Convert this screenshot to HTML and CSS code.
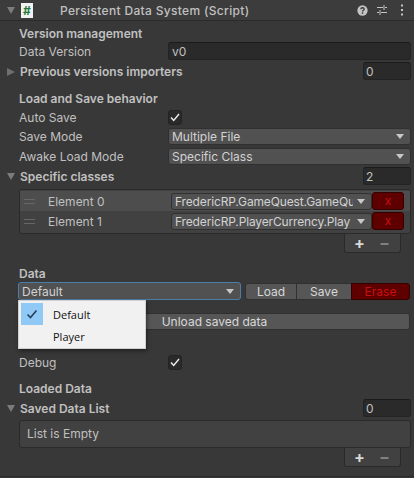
FILE: index.html
```html
<!DOCTYPE html>
<html lang="en">

<head>
  <meta charset="UTF-8">
  <title>Persistent Data System</title>
  <link rel="stylesheet" href="styles.css">
</head>

<body>
  <div class="header">
    <span class="fold open"></span>
    <span class="script-icon">#</span>
    <span class="title">Persistent Data System (Script)</span>
    <svg class="tool help" width="11" height="11" viewBox="0 0 12 12">
      <circle cx="6" cy="6" r="5.6" fill="#c4c4c4" />
      <path d="M4.1 4.7C4.2 3.5 5 3 6 3S7.9 3.6 7.9 4.6C7.9 5.8 6 5.8 6 7.2" fill="none" stroke="#383838" stroke-width="1.4" />
      <rect x="5.2" y="8" width="1.6" height="1.6" fill="#383838" />
    </svg>
    <svg class="tool presets" width="12" height="12" viewBox="0 0 12 12">
      <path d="M1 3.5H7M9 3.5H11M1 8.5H3M5 8.5H11M8 1V6M4 6V11" fill="none" stroke="#c4c4c4" stroke-width="1" />
    </svg>
    <svg class="tool menu" width="4" height="12" viewBox="0 0 4 12">
      <rect x="1" y="0.5" width="2" height="2" fill="#c4c4c4" />
      <rect x="1" y="5" width="2" height="2" fill="#c4c4c4" />
      <rect x="1" y="9.5" width="2" height="2" fill="#c4c4c4" />
    </svg>
  </div>

  <div class="inspector">
    <div class="row bold mt3">Version management</div>
    <div class="row">
      <span class="label">Data Version</span>
      <span class="field grow">v0</span>
    </div>
    <div class="row mt2 foldout">
      <span class="fold"></span>
      <span class="label grow bold">Previous versions importers</span>
      <span class="field count">0</span>
    </div>

    <div class="row bold mt9">Load and Save behavior</div>
    <div class="row mt1">
      <span class="label">Auto Save</span>
      <span class="checkbox">
        <svg width="10" height="9" viewBox="0 0 10 9"><path d="M1 4.5L3.7 7.5L9 1" fill="none" stroke="#eeeeee" stroke-width="1.4" /></svg>
      </span>
    </div>
    <div class="row mt1">
      <span class="label">Save Mode</span>
      <span class="dropdown grow"><span class="value">Multiple File</span><i class="caret"></i></span>
    </div>
    <div class="row mt2">
      <span class="label">Awake Load Mode</span>
      <span class="dropdown grow"><span class="value">Specific Class</span><i class="caret"></i></span>
    </div>
    <div class="row mt2 foldout">
      <span class="fold open"></span>
      <span class="label grow bold">Specific classes</span>
      <span class="field count">2</span>
    </div>

    <div class="list-box classes">
      <div class="element active">
        <span class="handle"></span>
        <span class="element-label">Element 0</span>
        <span class="dropdown element-type"><span class="value">FredericRP.GameQuest.GameQu</span><i class="caret"></i></span>
        <span class="remove">x</span>
      </div>
      <div class="element">
        <span class="handle"></span>
        <span class="element-label">Element 1</span>
        <span class="dropdown element-type"><span class="value">FredericRP.PlayerCurrency.Play</span><i class="caret"></i></span>
        <span class="remove">x</span>
      </div>
    </div>
    <div class="list-footer"><span class="plus">+</span><span class="minus">&minus;</span></div>

    <div class="row bold mt11">Data</div>
    <div class="row data-row">
      <span class="dropdown data-select"><span class="value">Default</span><i class="caret"></i></span>
      <span class="btn-group">
        <span class="btn load">Load</span>
        <span class="btn save">Save</span>
        <span class="btn erase">Erase</span>
      </span>
    </div>
    <div class="btn unload">Unload saved data</div>

    <div class="row debug-row">
      <span class="label">Debug</span>
      <span class="checkbox">
        <svg width="10" height="9" viewBox="0 0 10 9"><path d="M1 4.5L3.7 7.5L9 1" fill="none" stroke="#eeeeee" stroke-width="1.4" /></svg>
      </span>
    </div>
    <div class="row bold mt8">Loaded Data</div>
    <div class="row mt2 foldout">
      <span class="fold open"></span>
      <span class="label grow bold">Saved Data List</span>
      <span class="field count">0</span>
    </div>
    <div class="list-box empty">List is Empty</div>
    <div class="list-footer"><span class="plus">+</span><span class="minus">&minus;</span></div>
  </div>

  <div class="bottom-line"></div>

  <div class="popup">
    <div class="popup-item">
      <span class="tick">
        <svg width="12" height="10" viewBox="0 0 12 10"><path d="M1.5 5.5L4.5 8.5L10.5 1.5" fill="none" stroke="#26405c" stroke-width="1.6" /></svg>
      </span>
      <span>Default</span>
    </div>
    <div class="popup-item">
      <span class="tick none"></span>
      <span>Player</span>
    </div>
  </div>
</body>

</html>
```

FILE: styles.css
```css
html, body {
  margin: 0;
  height: 478px;
  overflow: hidden;
}

body {
  position: relative;
  background: #383838;
  color: #c0c0c0;
  font-family: Inter, "Liberation Sans", sans-serif;
  font-size: 12px;
}

.header {
  display: flex;
  align-items: center;
  height: 20px;
  background: #3c3c3c;
  border-bottom: 1px solid #2b2b2b;
  padding-left: 7px;
}

.header .fold {
  margin-right: 6px;
}

.script-icon {
  width: 12px;
  height: 15px;
  background: #f2f2f2;
  color: #1f7a3c;
  font-size: 12px;
  font-weight: 700;
  line-height: 15px;
  text-align: center;
}

.title {
  flex: 1;
  margin-left: 27px;
  font-weight: 500;
  letter-spacing: 0.33px;
}

.tool {
  flex: none;
}

.presets {
  margin-left: 8px;
}

.menu {
  margin: 0 10px 0 12px;
}

.inspector {
  padding: 0 3px 0 19px;
}

.row {
  display: flex;
  align-items: center;
  height: 18px;
}

.bold {
  font-weight: 600;
}

.mt1 { margin-top: 1px; }
.mt2 { margin-top: 2px; }
.mt3 { margin-top: 3px; }
.mt8 { margin-top: 8px; }
.mt9 { margin-top: 9px; }
.mt11 { margin-top: 11px; }

.label {
  flex: none;
  width: 149px;
}

.grow {
  flex: 1;
  min-width: 0;
}

.foldout {
  position: relative;
}

.foldout .label {
  padding-left: 1px;
}

.fold {
  flex: none;
  width: 0;
  height: 0;
  border-style: solid;
  border-width: 4.5px 0 4.5px 8px;
  border-color: transparent transparent transparent #6e6e6e;
}

.fold.open {
  border-width: 7px 4.5px 0 4.5px;
  border-color: #7c7c7c transparent transparent transparent;
}

.foldout .fold {
  position: absolute;
  left: -12px;
  top: 6px;
}

.field {
  box-sizing: border-box;
  height: 18px;
  line-height: 17px;
  padding-left: 3px;
  background: #2a2a2a;
  border: 1px solid #232323;
  border-top-color: #1b1b1b;
  border-radius: 3px;
}

.count {
  flex: none;
  width: 48px;
  padding-left: 2px;
}

.checkbox {
  box-sizing: border-box;
  display: flex;
  align-items: center;
  justify-content: center;
  width: 14px;
  height: 15px;
  background: #2a2a2a;
  border: 1px solid #232323;
  border-radius: 3px;
}

.dropdown {
  box-sizing: border-box;
  display: flex;
  align-items: center;
  height: 17px;
  padding: 0 4px 0 3px;
  background: #515151;
  border: 1px solid #303030;
  border-radius: 3px;
  color: #d2d2d2;
}

.value {
  flex: 1;
  min-width: 0;
  overflow: hidden;
  white-space: nowrap;
}

.caret {
  flex: none;
  width: 0;
  height: 0;
  margin: 0 2px 0 4px;
  border-style: solid;
  border-width: 5px 4px 0 4px;
  border-color: #c8c8c8 transparent transparent transparent;
}

.list-box {
  box-sizing: border-box;
  background: #414141;
  border: 1px solid #2a2a2a;
  border-radius: 3px;
}

.classes {
  height: 45px;
  margin-top: 4px;
  padding-top: 1px;
}

.element {
  display: flex;
  align-items: center;
  height: 20px;
  padding-left: 4px;
}

.element.active {
  background: #4d4d4d;
}

.handle {
  flex: none;
  width: 11px;
  height: 3px;
  border-top: 1px solid #666666;
  border-bottom: 1px solid #666666;
}

.element-label {
  flex: none;
  width: 123px;
  margin-left: 13px;
}

.element-type {
  width: 201px;
  flex: none;
  letter-spacing: -0.15px;
}

.remove {
  flex: none;
  box-sizing: border-box;
  width: 32px;
  height: 18px;
  background: #5e0000;
  border: 1px solid #350000;
  border-radius: 3px;
  color: #c80f0f;
  line-height: 15px;
  text-align: center;
}

.list-footer {
  box-sizing: border-box;
  display: flex;
  align-items: center;
  width: 57px;
  height: 19px;
  margin: 0 10px 0 auto;
  padding-left: 9px;
  background: #414141;
  border: 1px solid #2a2a2a;
  border-top: none;
  border-radius: 0 0 3px 3px;
  font-size: 16px;
  font-weight: 700;
}

.plus {
  width: 25px;
  color: #d8d8d8;
}

.minus {
  color: #808080;
}

.data-select {
  flex: none;
  box-sizing: border-box;
  width: 223px;
  height: 18px;
  margin-left: -1px;
  border-color: #4c7da8;
}

.btn-group {
  display: flex;
  margin-left: 4px;
}

.btn {
  box-sizing: border-box;
  height: 17px;
  background: #565656;
  border: 1px solid #303030;
  color: #d8d8d8;
  line-height: 15px;
  text-align: center;
}

.load {
  width: 52px;
  border-radius: 3px 0 0 3px;
}

.save {
  width: 56px;
  margin-left: -1px;
}

.erase {
  width: 59px;
  margin-left: -1px;
  background: #5e0000;
  border-color: #350000;
  border-radius: 0 3px 3px 0;
  color: #c80f0f;
}

.unload {
  margin: 13px 1px 0 0;
  border-radius: 3px;
}

.debug-row {
  margin-top: 23px;
}

.empty {
  height: 28px;
  margin-top: 3px;
  padding: 0 0 0 7px;
  line-height: 26px;
}

.bottom-line {
  position: absolute;
  left: 0;
  right: 0;
  top: 476px;
  height: 1px;
  background: #2b2b2b;
}

.popup {
  position: absolute;
  left: 18px;
  top: 300px;
  box-sizing: border-box;
  width: 128px;
  height: 49px;
  padding: 2px;
  background: #f1f1f1;
  border: 1px solid #d0d0d0;
  box-shadow: 1px 2px 4px rgba(0, 0, 0, 0.45);
  color: #111111;
  font-family: "Open Sans", "Noto Sans", sans-serif;
  font-size: 11px;
}

.popup-item {
  display: flex;
  align-items: center;
  height: 22px;
}

.tick {
  display: flex;
  align-items: center;
  justify-content: center;
  width: 22px;
  height: 22px;
  margin-right: 10px;
  background: #90c8f6;
}

.tick.none {
  background: none;
}
```
